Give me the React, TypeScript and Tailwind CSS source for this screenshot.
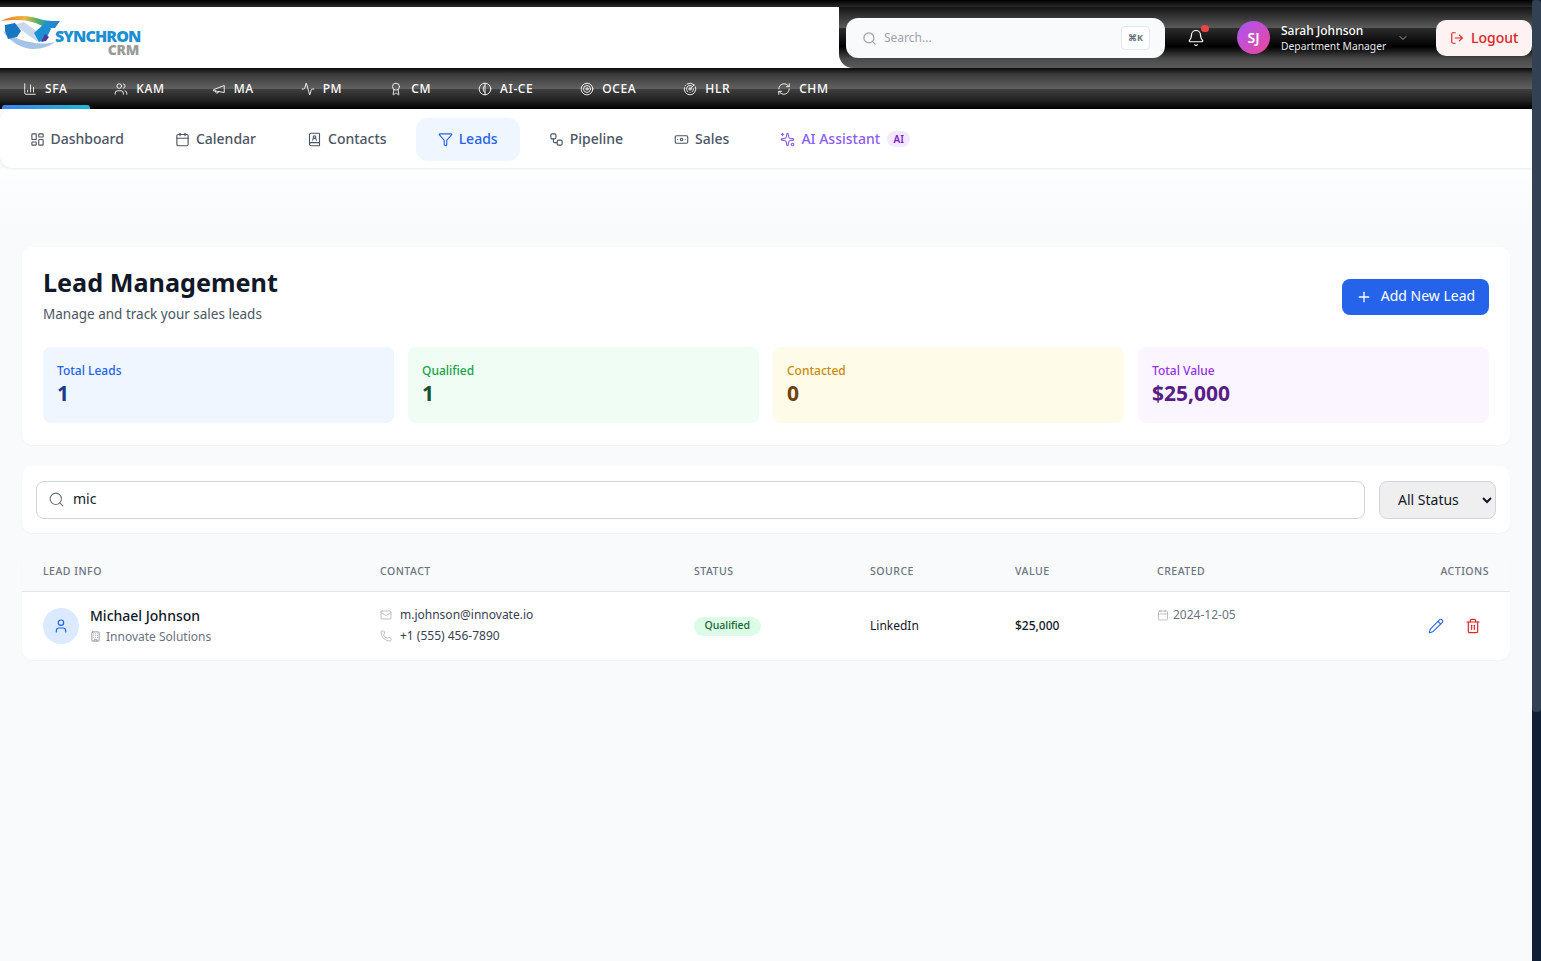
import React from 'react';
import {
  BarChart3, Users, Activity, Award, Target, Radar, RefreshCw,
  LayoutDashboard, Calendar, BookUser, Filter, Workflow, Banknote, Sparkles,
  Search, Bell, ChevronDown, LogOut, Plus, User, Building, Mail, Phone, Pencil, Trash2,
} from 'lucide-react';

const navGloss = 'bg-[linear-gradient(180deg,#0a0a0a_0%,#3a3a3a_15%,#606060_50%,#404040_50%,#262626_75%,#000000_100%)]';
const headGloss = 'bg-[linear-gradient(180deg,#141414_0%,#5a5a5a_34%,#2c2c2c_35%,#000000_65%,#4a4a4a_85%,#5a5a5a_100%)]';

function MegaphoneIcon({ size, strokeWidth }: { size: number; strokeWidth: number }) {
  return (
    <svg width={size} height={size} viewBox="0 0 24 24" fill="none" stroke="currentColor" strokeWidth={strokeWidth} strokeLinecap="round" strokeLinejoin="round">
      <path d="M3 13 21 6v12L3 15z" />
      <path d="M11.6 16.8a3 3 0 1 1-5.8-1.6" />
    </svg>
  );
}

function HalfBrainIcon({ size, strokeWidth }: { size: number; strokeWidth: number }) {
  return (
    <svg width={size} height={size} viewBox="0 0 24 24" fill="none" stroke="currentColor" strokeWidth={strokeWidth} strokeLinecap="round" strokeLinejoin="round">
      <circle cx="12" cy="12" r="10" />
      <path d="M12 2v20" />
      <path d="M12 6c-2 1-3 3-3 6s1 5 3 6" />
    </svg>
  );
}

const modules = [
  { label: 'SFA', icon: BarChart3, active: true },
  { label: 'KAM', icon: Users },
  { label: 'MA', icon: MegaphoneIcon },
  { label: 'PM', icon: Activity },
  { label: 'CM', icon: Award },
  { label: 'AI-CE', icon: HalfBrainIcon },
  { label: 'OCEA', icon: Target },
  { label: 'HLR', icon: Radar },
  { label: 'CHM', icon: RefreshCw },
];

const tabs = [
  { label: 'Dashboard', icon: LayoutDashboard },
  { label: 'Calendar', icon: Calendar },
  { label: 'Contacts', icon: BookUser },
  { label: 'Leads', icon: Filter, active: true },
  { label: 'Pipeline', icon: Workflow },
  { label: 'Sales', icon: Banknote },
];

const stats = [
  { label: 'Total Leads', value: '1', bg: 'bg-[#eff6ff]', label_c: 'text-[#2563eb]', value_c: 'text-[#1e3a8a]' },
  { label: 'Qualified', value: '1', bg: 'bg-[#f0fdf4]', label_c: 'text-[#16a34a]', value_c: 'text-[#14532d]' },
  { label: 'Contacted', value: '0', bg: 'bg-[#fefce8]', label_c: 'text-[#ca8a04]', value_c: 'text-[#713f12]' },
  { label: 'Total Value', value: '$25,000', bg: 'bg-[#faf5ff]', label_c: 'text-[#9333ea]', value_c: 'text-[#581c87]' },
];

const tableCols = 'grid grid-cols-[337px_314px_176px_145px_142px_1fr_auto] items-center pl-[21px]';

function Logo() {
  return (
    <div className="relative h-[52px] w-[139px]">
      <svg width="62" height="36" viewBox="0 0 62 36" className="absolute left-0 top-[9px]">
        <defs>
          <linearGradient id="arc" x1="0" x2="1">
            <stop offset="0" stopColor="#e8762c" />
            <stop offset="0.4" stopColor="#f0b43c" />
            <stop offset="0.62" stopColor="#55b06a" />
            <stop offset="0.8" stopColor="#1d8fd0" />
            <stop offset="1" stopColor="#2f7fc4" />
          </linearGradient>
        </defs>
        <path d="M3 15 C10 26 22 33 34 33 C42 33 50 30 55 26 C46 28 38 28 30 26 C20 24 10 20 3 15Z" fill="#a6c3e6" />
        <path d="M14 9 L24 6 L46 22 L38 26Z" fill="#c8d9ef" />
        <path d="M1 5 C10 0 22 -1 32 1 C38 2 44 5 52 5 L60 5 L55 12 L46 12 C38 7 28 4 18 4 C12 4 6 4 1 5Z" fill="url(#arc)" />
        <path d="M5 9 L15 7 L21 15 L17 21 L8 23 L5 15Z" fill="#1976c0" />
        <path d="M34 17 L45 7 L51 13 L46 23 L39 26Z" fill="#1b8fd2" />
        <path d="M41 26 L45 18 L49 21 L46 25Z" fill="#4b3a9c" />
      </svg>
      <span className="absolute left-[55px] top-[22px] text-[16px] leading-[14px] font-extrabold tracking-[-0.9px] text-[#1b8fd2] font-['Open_Sans',sans-serif]">SYNCHRON</span>
      <span className="absolute right-0 top-[37px] text-[14px] leading-[12px] font-extrabold tracking-[-0.3px] text-[#9a9a9a] font-['Open_Sans',sans-serif]">CRM</span>
    </div>
  );
}

export default function App() {
  return (
    <div className="h-[961px] overflow-hidden flex bg-[#f8fafc] font-['Noto_Sans',sans-serif] text-[#111827]">
      <div className="w-[1532px] flex flex-col">
        {/* top header */}
        <div className="h-[7px] bg-[linear-gradient(180deg,#000000,#2a2a2a)]" />
        <div className="h-[61px] flex bg-white">
          <div className="w-[839px] shrink-0">
            <Logo />
          </div>
          <div className={`flex-1 min-w-0 rounded-bl-[14px] flex items-center ${headGloss} pl-[7px]`}>
            <div className="w-[319px] shrink-0 h-[40px] mt-[1px] rounded-[12px] bg-[#f8fafc] flex items-center pl-[16px] pr-[15px] gap-[7px]">
              <Search size={15} className="text-[#9ca3af]" />
              <span className="text-[12px] text-[#9ca3af] flex-1">Search...</span>
              <span className="w-[29px] h-[24px] rounded-[4px] border border-[#e5e7eb] bg-white text-[9px] font-bold text-[#6b7280] flex items-center justify-center">⌘K</span>
            </div>
            <div className="relative ml-[22px] shrink-0">
              <Bell size={18} strokeWidth={1.6} className="text-white" />
              <span className="absolute -top-[4px] -right-[4px] w-[8px] h-[7px] rounded-full bg-[#ef4444]" />
            </div>
            <div className="ml-[32px] shrink-0 w-[33px] h-[33px] rounded-full bg-[linear-gradient(135deg,#a855f7,#ec4899)] text-white text-[14px] font-semibold flex items-center justify-center">SJ</div>
            <div className="ml-[11px] mt-[1px] whitespace-nowrap shrink-0">
              <div className="text-[12px] leading-[16px] font-medium text-white">Sarah Johnson</div>
              <div className="text-[10.3px] leading-[15px] text-[#e5e7eb]">Department Manager</div>
            </div>
            <ChevronDown size={12} className="ml-[11px] shrink-0 text-[#9ca3af]" />
            <div className="ml-[27px] shrink-0 w-[96px] h-[36px] mt-[1px] rounded-[10px] bg-[#fef2f2] text-[#dc2626] text-[14px] font-medium flex items-center justify-center gap-[7px]">
              <LogOut size={14} />
              <span className="pb-[2px]">Logout</span>
            </div>
          </div>
        </div>

        {/* module nav */}
        <div className={`h-[41px] flex items-stretch pl-[2px] ${navGloss}`}>
          {modules.map((m) => {
            const Icon = m.icon;
            return (
              <div key={m.label} className="relative px-[21px] mr-[5px] flex items-center gap-[8px] text-white text-[12px] font-medium tracking-[0.6px]">
                <Icon size={14} strokeWidth={1.5} />
                <span>{m.label}</span>
                {m.active && <div className="absolute left-0 -right-[2px] bottom-0 h-[4px] rounded-t-[3px] bg-[linear-gradient(90deg,#3b82f6,#22b8cf)]" />}
              </div>
            );
          })}
        </div>

        {/* sub nav */}
        <div className="h-[59px] bg-white rounded-l-[12px] shadow-[0_1px_3px_rgba(0,0,0,0.08)] flex items-center pl-[7.5px] pt-[1px] gap-[7px] z-10">
          {tabs.map((t) => {
            const Icon = t.icon;
            return (
              <div key={t.label} className={`h-[43px] px-[22px] rounded-[12px] flex items-center gap-[6px] text-[14px] font-medium ${t.active ? 'bg-[#eff6ff] text-[#2563eb]' : 'text-[#4b5563]'}`}>
                <Icon size={15} strokeWidth={1.8} />
                <span className="pb-[1px]">{t.label}</span>
              </div>
            );
          })}
          <div className="h-[43px] px-[22px] flex items-center gap-[6px] text-[14px] font-medium text-[#8b5cf6]">
            <Sparkles size={15} strokeWidth={1.8} className="-scale-x-100" />
            <span className="pb-[1px]">AI Assistant</span>
            <span className="ml-[1px] px-[6.5px] h-[16px] rounded-full bg-[#f3e8ff] text-[#7e22ce] text-[10px] font-semibold flex items-center">AI</span>
          </div>
        </div>

        {/* page */}
        <div className="flex-1 px-[22px] pt-[79px] bg-[linear-gradient(180deg,#fdfefe_0px,#f8fafc_57px)]">
          <div className="w-[1488px] h-[198px] bg-white rounded-[10px] shadow-[0_1px_2px_rgba(0,0,0,0.04)] px-[21px] pt-[19px]">
            <div className="flex justify-between items-start">
              <div>
                <h1 className="text-[25.2px] leading-[32px] font-bold text-[#111827]">Lead Management</h1>
                <p className="text-[13.5px] leading-[20px] mt-[6px] text-[#4b5563]">Manage and track your sales leads</p>
              </div>
              <button className="mt-[13px] h-[36px] w-[147px] rounded-[8px] bg-[#2563eb] text-white text-[14px] flex items-center justify-center gap-[9px]">
                <Plus size={16} />
                <span className="pb-[3px]">Add New Lead</span>
              </button>
            </div>
            <div className="grid grid-cols-4 gap-[14px] mt-[23px]">
              {stats.map((s) => (
                <div key={s.label} className={`h-[76px] rounded-[8px] pl-[14px] pt-[15px] ${s.bg}`}>
                  <div className={`text-[12px] leading-[18px] font-medium ${s.label_c}`}>{s.label}</div>
                  <div className={`text-[21px] leading-[28px] -mt-[1px] font-bold ${s.value_c}`}>{s.value}</div>
                </div>
              ))}
            </div>
          </div>

          <div className="mt-[21px] w-[1488px] h-[67px] bg-white rounded-[10px] shadow-[0_1px_2px_rgba(0,0,0,0.04)] flex items-center px-[14px] gap-[14px]">
            <div className="flex-1 h-[38px] rounded-[8px] border border-[#d1d5db] flex items-center pl-[11px] gap-[8px]">
              <Search size={17} strokeWidth={1.5} className="text-[#6b7280]" />
              <span className="text-[14px] pb-[2px] text-[#111827]">mic</span>
            </div>
            <select className="w-[117px] h-[38px] rounded-[8px] border border-[#d1d5db] bg-[#efefef] pl-[14px] text-[14px] text-[#111827]" defaultValue="all">
              <option value="all">All Status</option>
            </select>
          </div>

          <div className="mt-[20px] w-[1488px] bg-white rounded-[10px] shadow-[0_1px_2px_rgba(0,0,0,0.04)] overflow-hidden">
            <div className={`h-[39px] bg-[#f8fafc] border-b border-[#e5e7eb] ${tableCols} pr-[21px] text-[10.5px] font-medium tracking-[0.5px] text-[#6b7280]`}>
              <div>LEAD INFO</div>
              <div>CONTACT</div>
              <div>STATUS</div>
              <div>SOURCE</div>
              <div>VALUE</div>
              <div>CREATED</div>
              <div>ACTIONS</div>
            </div>
            <div className={`h-[68px] ${tableCols} pr-[29px]`}>
              <div className="flex items-center gap-[11px]">
                <div className="w-[36px] h-[36px] rounded-full bg-[#dbeafe] flex items-center justify-center text-[#2563eb]">
                  <User size={16} strokeWidth={1.8} />
                </div>
                <div>
                  <div className="text-[14px] leading-[20px] font-medium text-[#111827]">Michael Johnson</div>
                  <div className="flex items-center gap-[5px] mt-[1px] text-[12px] leading-[20px] text-[#6b7280]">
                    <Building size={11} strokeWidth={1.5} />
                    <span>Innovate Solutions</span>
                  </div>
                </div>
              </div>
              <div className="text-[12px] leading-[21px] text-[#374151] mb-[2px]">
                <div className="flex items-center gap-[8px]"><Mail size={12} strokeWidth={1.3} className="text-[#9ca3af]" /><span>m.johnson@innovate.io</span></div>
                <div className="flex items-center gap-[8px]"><Phone size={12} strokeWidth={1.3} className="text-[#9ca3af]" /><span>+1 (555) 456-7890</span></div>
              </div>
              <div className="flex">
                <span className="flex items-center h-[19px] px-[10.5px] pb-[1px] rounded-full bg-[#dcfce7] text-[#166534] text-[10.5px] font-medium">Qualified</span>
              </div>
              <div className="text-[12px] text-[#111827]">LinkedIn</div>
              <div className="text-[12px] font-medium text-[#111827]">$25,000</div>
              <div className="self-start mt-[13px] flex items-center gap-[4px] text-[12px] leading-[20px] text-[#6b7280]">
                <Calendar size={12} strokeWidth={1.3} className="text-[#9ca3af]" />
                <span>2024-12-05</span>
              </div>
              <div className="flex items-center gap-[21px]">
                <Pencil size={16} strokeWidth={1.6} className="text-[#2563eb]" />
                <Trash2 size={16} strokeWidth={1.8} className="text-[#dc2626]" />
              </div>
            </div>
          </div>
        </div>
      </div>
      {/* scrollbar */}
      <div className="w-[9px] h-[961px] bg-[#0f1f35]">
        <div className="h-[712px] rounded-[4px] bg-[#334155]" />
      </div>
    </div>
  );
}
